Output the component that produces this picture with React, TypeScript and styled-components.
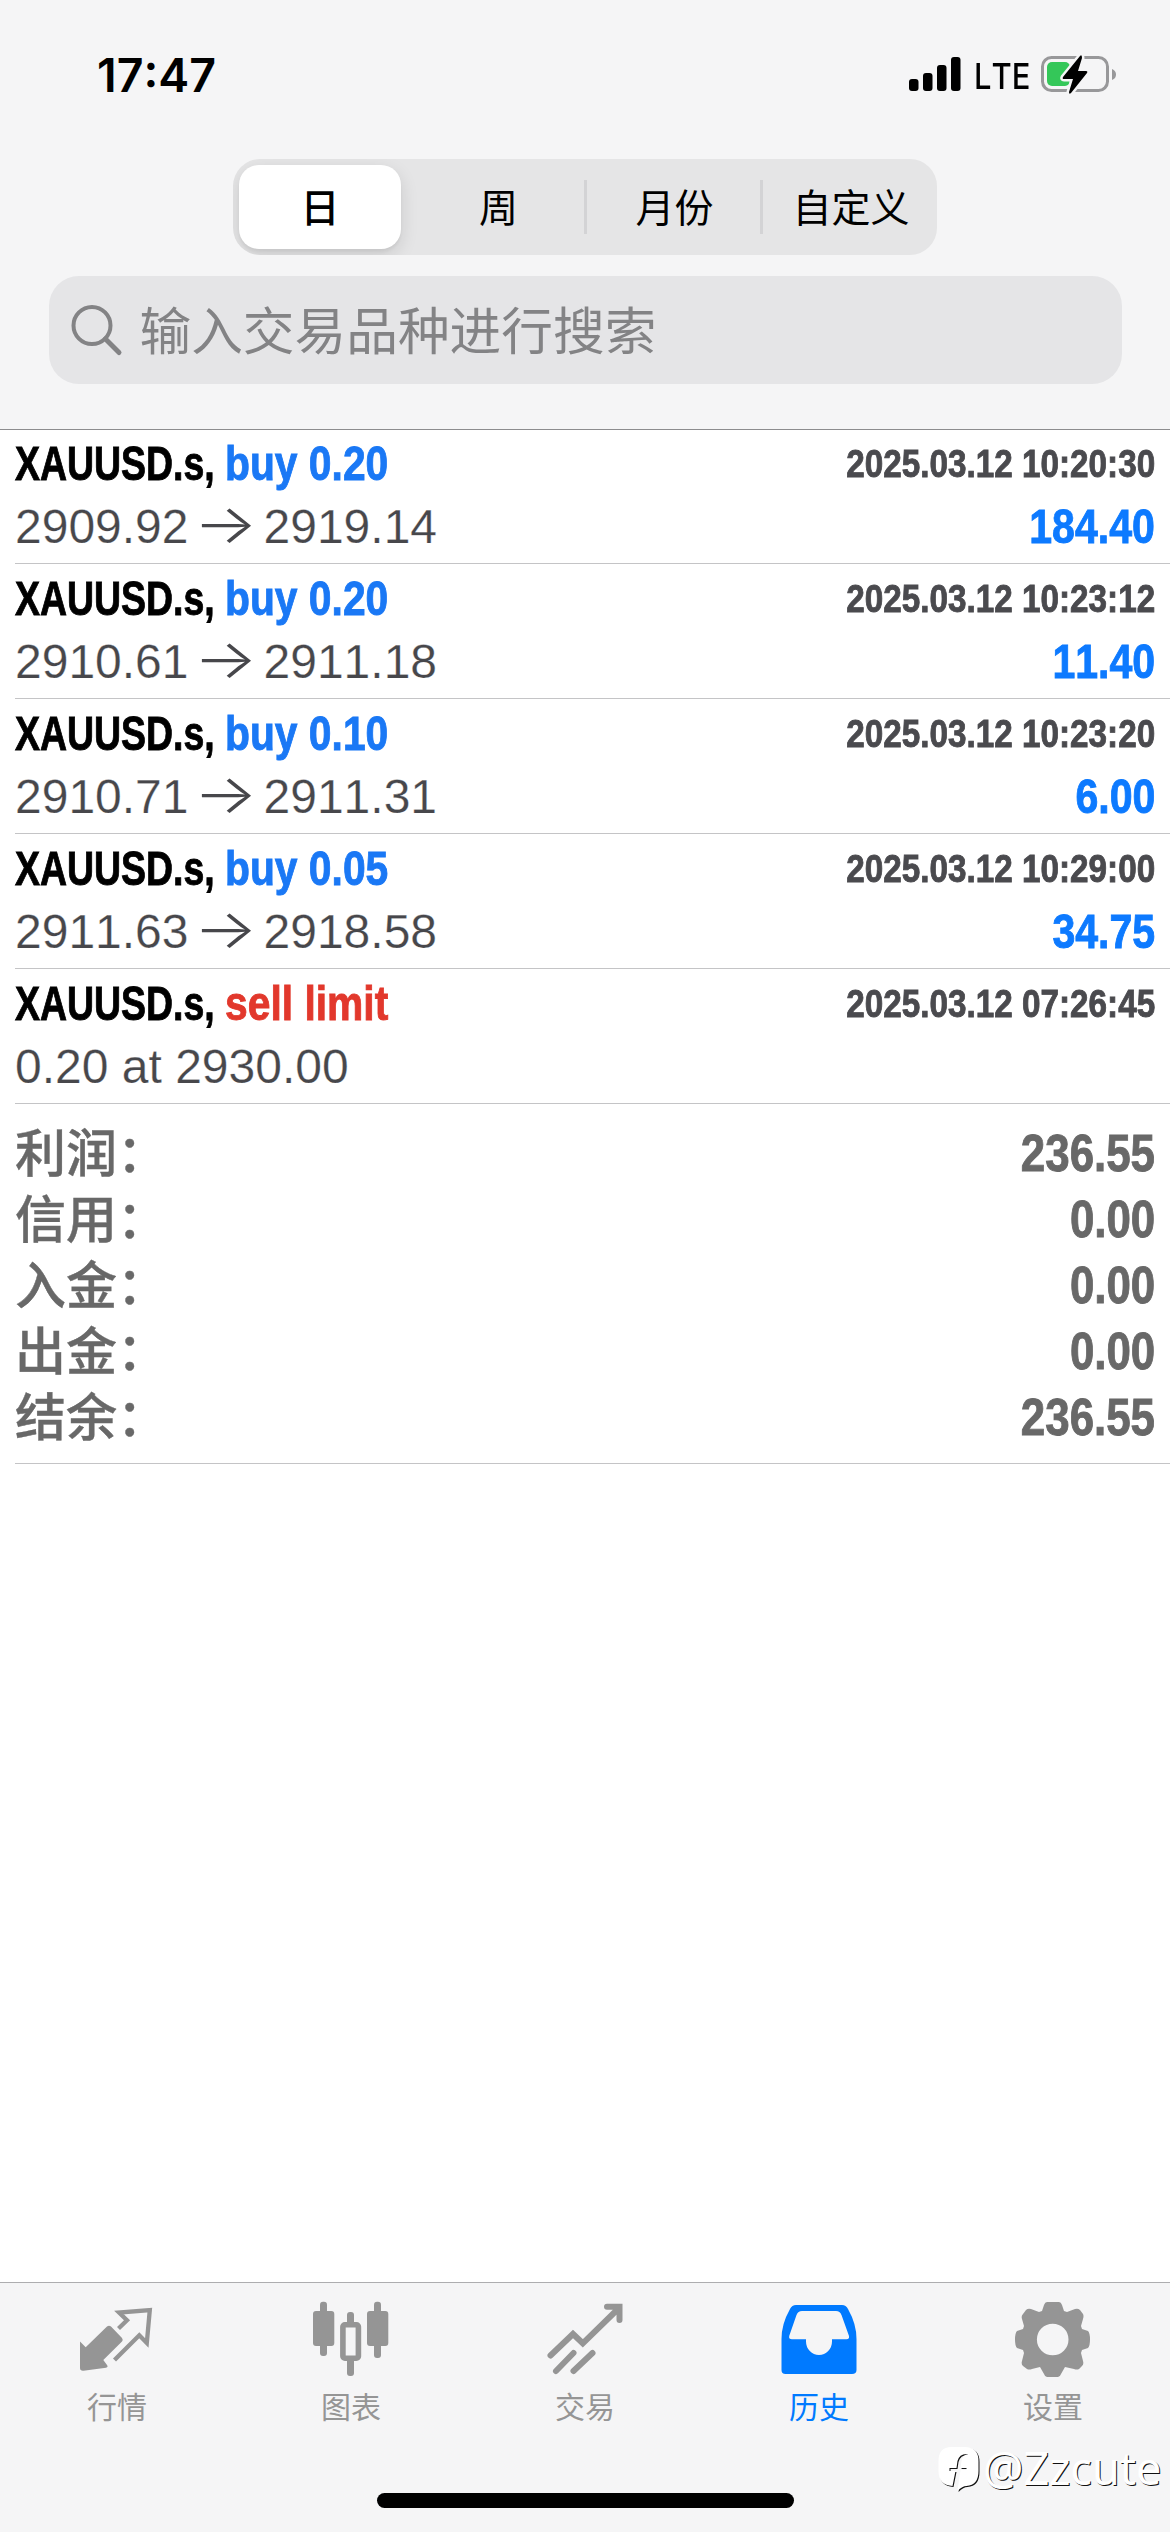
import React from 'react';
import styled, { createGlobalStyle } from 'styled-components';

const latin = `"Liberation Sans", "Noto Sans CJK SC", sans-serif`;
const system = `Inter, "Noto Sans CJK SC", sans-serif`;

const GlobalStyle = createGlobalStyle`
  * { box-sizing: border-box; }
  html, body { margin: 0; background: #fff; }
`;

const Screen = styled.div`
  width: 1170px;
  height: 2532px;
  display: flex;
  flex-direction: column;
  background: #fff;
  font-family: ${latin};
  font-kerning: none;
  position: relative;
  overflow: hidden;
`;

const Header = styled.header`
  height: 430px;
  background: #f5f5f6;
  border-bottom: 1px solid #8c8c8e;
  display: flex;
  flex-direction: column;
  align-items: center;
`;

const StatusBar = styled.div`
  width: 100%;
  height: 159px;
  padding: 50px 53px 0 97px;
  display: flex;
  justify-content: space-between;
  align-items: flex-start;
  font-family: ${system};
  color: #000;
`;

const Clock = styled.div`
  font-size: 46.5px;
  line-height: 50px;
  font-weight: 600;
`;

const StatusIcons = styled.div`
  height: 48px;
  display: flex;
  align-items: center;
`;

const Carrier = styled.span`
  width: 52px;
  font-size: 36px;
  line-height: 48px;
  font-weight: 550;
  margin: 4px 15px 0 13px;

  & > span {
    display: inline-block;
    transform: scaleX(0.86);
    transform-origin: left center;
  }
`;

const Segmented = styled.div`
  width: 704px;
  height: 96px;
  padding: 6px;
  border-radius: 27px;
  background: #e5e5e6;
  display: flex;
  align-items: center;
  overflow: hidden;
`;

const Segment = styled.div<{ $active?: boolean; $divider?: boolean }>`
  flex: 0 0 ${p => (p.$active ? 162 : 176)}px;
  height: ${p => (p.$active ? 84 : 54)}px;
  margin-right: ${p => (p.$active ? 10 : 0)}px;
  padding: 0 0 5px ${p => (p.$divider ? 2 : 0)}px;
  border-radius: ${p => (p.$active ? 20 : 0)}px;
  background: ${p => (p.$active ? '#fff' : 'transparent')};
  box-shadow: ${p => (p.$active ? '0 6px 18px rgba(0,0,0,.12), 0 3px 3px rgba(0,0,0,.04)' : 'none')};
  border-right: ${p => (p.$divider ? '3px solid #d3d3d5' : '0')};
  display: flex;
  align-items: center;
  justify-content: center;
  font-family: ${system};
  font-size: 39px;
  font-weight: ${p => (p.$active ? 500 : 400)};
  color: #000;
`;

const Search = styled.div`
  width: 1073px;
  height: 108px;
  margin-top: 21px;
  padding-left: 22px;
  border-radius: 30px;
  background: #e5e5e7;
  display: flex;
  align-items: center;
  gap: 16px;
  color: #838385;
  font-family: ${system};
  font-size: 51.7px;

  & > span { padding-bottom: 5px; }
`;

const List = styled.main`
  flex: 1;
  padding-left: 15px;
  display: flex;
  flex-direction: column;
`;

const Deal = styled.article`
  height: 135px;
  flex: none;
  padding: 3px 15px 0 0;
  border-bottom: 1px solid #c4c4c6;

  &:first-child {
    height: 134px;
    padding-top: 2px;
  }
`;

const Line = styled.div`
  height: 63px;
  display: flex;
  justify-content: space-between;
  align-items: center;
  white-space: pre;
`;

const Left = styled.div`
  display: flex;
`;

const Condensed = styled.span<{ $w: number; $scale: number; $size?: number; $color: string; $end?: boolean }>`
  width: ${p => p.$w}px;
  display: flex;
  justify-content: ${p => (p.$end ? 'flex-end' : 'flex-start')};
  font-size: ${p => p.$size ?? 48}px;
  line-height: 60px;
  font-weight: 700;
  color: ${p => p.$color};
  -webkit-text-stroke: 0.9px ${p => p.$color};

  & > span {
    transform: scaleX(${p => p.$scale});
    transform-origin: ${p => (p.$end ? 'right' : 'left')} center;
  }
`;

const Price = styled.div`
  display: flex;
  font-size: 48px;
  line-height: 60px;
  color: #47474b;
  -webkit-text-stroke: 0.25px #fff;
`;

const Arrow = styled.span`
  width: 75px;
  display: flex;
  justify-content: center;
  font-family: Inter, sans-serif;
  font-weight: 300;
  -webkit-text-stroke: 0;
  transform: translate(-1px, -3px) scale(1.4, 1.12);
`;

const Summary = styled.section`
  height: 360px;
  padding: 17px 15px 0 0;
  border-bottom: 1px solid #c4c4c6;
`;

const Total = styled.div`
  height: 66px;
  display: flex;
  justify-content: space-between;
  align-items: center;
  color: #686868;
`;

const TotalLabel = styled.span`
  font-family: "Noto Sans CJK SC", sans-serif;
  font-size: 51px;
  line-height: 58px;
  padding-bottom: 8px;
  font-weight: 500;
  -webkit-text-stroke: 0.4px #686868;
`;

const TabBar = styled.nav`
  height: 250px;
  background: #f5f5f6;
  border-top: 1px solid #adadaf;
  display: grid;
  grid-template-columns: repeat(5, 234px);
  grid-template-rows: 210px auto;
`;

const Tab = styled.div<{ $active?: boolean }>`
  display: flex;
  flex-direction: column;
  align-items: center;
  padding-top: 15px;
  font-family: "Noto Sans CJK SC", sans-serif;
  font-size: 30px;
  line-height: 40px;
  color: ${p => (p.$active ? '#007aff' : '#959595')};

  svg { margin-bottom: 1px; }
`;

const HomeIndicator = styled.div`
  grid-column: 1 / -1;
  justify-self: center;
  width: 417px;
  height: 15px;
  border-radius: 8px;
  background: #000;
`;

const Watermark = styled.div`
  position: absolute;
  left: 936px;
  top: 2443px;
  display: flex;
  align-items: center;
  font-family: "Noto Sans", sans-serif;
  font-size: 45px;
  line-height: 50px;
  font-weight: 400;
  color: #fff;
  text-shadow: 1px 1px 0.5px #111;

  svg { filter: drop-shadow(1px 1px 0.3px #111); }
`;

const Signal = () => (
  <svg width="52" height="36" viewBox="0 0 52 36">
    <rect x="0" y="23" width="9.5" height="12" rx="3" />
    <rect x="14" y="17" width="9.5" height="18" rx="3" />
    <rect x="28" y="9" width="9.5" height="26" rx="3" />
    <rect x="42" y="1" width="9.5" height="34" rx="3" />
  </svg>
);

const Battery = () => (
  <svg width="76" height="42" viewBox="0 0 76 42">
    <rect x="1.5" y="4.500" width="65" height="33" rx="9" fill="none" stroke="#98989a" strokeWidth="3" />
    <rect x="6" y="9" width="23" height="24" rx="5" fill="#34c759" />
    <path d="M71 16q4 1.500 4 5.500t-4 5.500z" fill="#98989a" />
    <path d="M39 3 22 24q-1 2 1 2h9l-4 13q0 3 2 1l16-20q1-2-1-2h-8l4-13q0-4-2-2z" stroke="#f5f5f6" strokeWidth="5" />
    <path d="M39 3 22 24q-1 2 1 2h9l-4 13q0 3 2 1l16-20q1-2-1-2h-8l4-13q0-4-2-2z" />
  </svg>
);

const SearchIcon = () => (
  <svg width="53" height="53" viewBox="0 0 53 53" fill="none" stroke="#838385" strokeWidth="4" strokeLinecap="round">
    <circle cx="21" cy="21.500" r="18.500" />
    <path d="M34.500 35 48 48.500" strokeWidth="5" />
  </svg>
);

const QuotesIcon = () => (
  <svg width="84" height="86" viewBox="0 0 84 86">
    <path fill="currentColor" d="M5 43.500 10.700 49.300 32 28.500Q34 27 36 28.500L47 40Q48.500 42 47 43.500L28.300 62 32 67Q33.500 69 31 69.700L8.500 72.700Q5 73 5 70Z" />
    <path fill="none" stroke="currentColor" strokeWidth="4.300" strokeLinejoin="miter" d="M43.500 30.500 52 22.300 44 14.500 74.800 12 71.800 45 64.300 37.300 39.500 62" />
  </svg>
);

const ChartIcon = () => (
  <svg width="84" height="86" viewBox="0 0 84 86" fill="currentColor">
    <rect x="4" y="13" width="21.300" height="35" rx="3" />
    <rect x="11" y="3.700" width="7" height="54.300" rx="3" />
    <rect x="58" y="13" width="21.300" height="35" rx="3" />
    <rect x="65" y="3.700" width="7" height="56.300" rx="3" />
    <rect x="38" y="14" width="7" height="14" rx="3" />
    <rect x="38" y="60" width="7" height="18" rx="3" />
    <rect x="33.900" y="26.800" width="15.500" height="33.400" rx="2" fill="none" stroke="currentColor" strokeWidth="5.600" />
  </svg>
);

const TradeIcon = () => (
  <svg width="84" height="86" viewBox="0 0 84 86" fill="none" stroke="currentColor" strokeWidth="6" strokeLinecap="round" strokeLinejoin="miter">
    <path d="M7.500 57.500 30 36 39.800 45.300 76 10M64 8.700H76.500V22" />
    <path d="M13 73 30.500 55M30.500 73 49.500 55" />
  </svg>
);

const HistoryIcon = () => (
  <svg width="84" height="86" viewBox="0 0 84 86" fill="currentColor" fillRule="evenodd">
    <path d="M19 7H65Q69 7 71 11 79.500 26 79.500 41V72Q79.500 76 75 76H8.500Q4.500 76 4.500 72V41Q4.500 26 13 11 15 7 19 7ZM25 13H59Q63 13 64.500 17L72 38Q72.500 41.300 69.500 41.300H55V43.500A13 13.500 0 0 1 29 43.500V41.300H15Q11.500 41.300 12.200 38L19.500 17Q21 13 25 13Z" />
  </svg>
);

const SettingsIcon = () => (
  <svg width="84" height="86" viewBox="0 0 84 86" fill="currentColor" fillRule="evenodd">
    <path d="M36 4H48Q50 4 51 7L53 13 56 14 64 11Q67 10 69 12L72 16Q73 18 72 21L70 28 71 31 77 33Q79 35 79 41.500T77 50L71 52 70 55 72 63Q73 66 71 68L68 71Q66 72 63 71L54 69 50 76Q49 79 47 79H36Q34 79 33 76L29 69 21 71Q18 72 16 71L12 68Q10 66 11 63L13 55 12 52 6 50Q4 48 4 41.500T6 33L12 31 13 28 11 21Q10 18 12 16L15 12Q17 10 20 11L28 14 31 13 33 7Q34 4 36 4ZM41.700 25.700A15.800 15.800 0 1 0 41.700 57.300A15.800 15.800 0 1 0 41.700 25.700Z" />
  </svg>
);

const WatermarkLogo = () => (
  <svg width="47" height="50" viewBox="0 0 44 50">
    <path fill="#fff" d="M14 4H27Q41 4 41 18V28Q41 42 29 43 25 43 20 48L23 27H29V25H23L24 18Q25 12 31 11 22 10 20 18L19 25H12V28H18L15 43Q1 42 1 28V18Q1 4 14 4Z" />
  </svg>
);

const deals = [
  { side: 'buy 0.20', time: '2025.03.12 10:20:30', from: '2909.92', to: '2919.14', profit: '184.40' },
  { side: 'buy 0.20', time: '2025.03.12 10:23:12', from: '2910.61', to: '2911.18', profit: '11.40' },
  { side: 'buy 0.10', time: '2025.03.12 10:23:20', from: '2910.71', to: '2911.31', profit: '6.00' },
  { side: 'buy 0.05', time: '2025.03.12 10:29:00', from: '2911.63', to: '2918.58', profit: '34.75' },
  { side: 'sell limit', time: '2025.03.12 07:26:45', note: '0.20 at 2930.00' },
];

const totals = [
  ['利润：', '236.55'],
  ['信用：', '0.00'],
  ['入金：', '0.00'],
  ['出金：', '0.00'],
  ['结余：', '236.55'],
];

const tabs = [
  { label: '行情', Icon: QuotesIcon },
  { label: '图表', Icon: ChartIcon },
  { label: '交易', Icon: TradeIcon },
  { label: '历史', Icon: HistoryIcon, active: true },
  { label: '设置', Icon: SettingsIcon },
];

export default function App() {
  return (
    <Screen>
      <GlobalStyle />
      <Header>
        <StatusBar>
          <Clock>17:47</Clock>
          <StatusIcons>
            <Signal />
            <Carrier><span>LTE</span></Carrier>
            <Battery />
          </StatusIcons>
        </StatusBar>
        <Segmented>
          <Segment $active>日</Segment>
          <Segment $divider>周</Segment>
          <Segment $divider>月份</Segment>
          <Segment>自定义</Segment>
        </Segmented>
        <Search>
          <SearchIcon />
          <span>输入交易品种进行搜索</span>
        </Search>
      </Header>
      <List>
        {deals.map(d => (
          <Deal key={d.time}>
            <Line>
              <Left>
                <Condensed $w={210} $scale={0.78} $color="#000"><span>XAUUSD.s,</span></Condensed>
                <Condensed $w={170} $scale={0.85} $color={d.note ? '#e2382c' : '#1a78f5'}><span>{d.side}</span></Condensed>
              </Left>
              <Condensed $w={320} $scale={0.853} $size={39} $color="#4a4a4e" $end><span>{d.time}</span></Condensed>
            </Line>
            <Line>
              {d.note ? (
                <Price>{d.note}</Price>
              ) : (
                <Price><span>{d.from}</span><Arrow>→</Arrow><span>{d.to}</span></Price>
              )}
              {d.profit && <Condensed $w={200} $scale={0.855} $color="#0d7aff" $end><span>{d.profit}</span></Condensed>}
            </Line>
          </Deal>
        ))}
        <Summary>
          {totals.map(([label, value]) => (
            <Total key={label}>
              <TotalLabel>{label}</TotalLabel>
              <Condensed $w={200} $scale={0.86} $size={51} $color="#686868" $end><span>{value}</span></Condensed>
            </Total>
          ))}
        </Summary>
      </List>
      <TabBar>
        {tabs.map(({ label, Icon, active }) => (
          <Tab key={label} $active={active}>
            <Icon />
            {label}
          </Tab>
        ))}
        <HomeIndicator />
      </TabBar>
      <Watermark>
        <WatermarkLogo />
        <span>@Zzcute</span>
      </Watermark>
    </Screen>
  );
}
